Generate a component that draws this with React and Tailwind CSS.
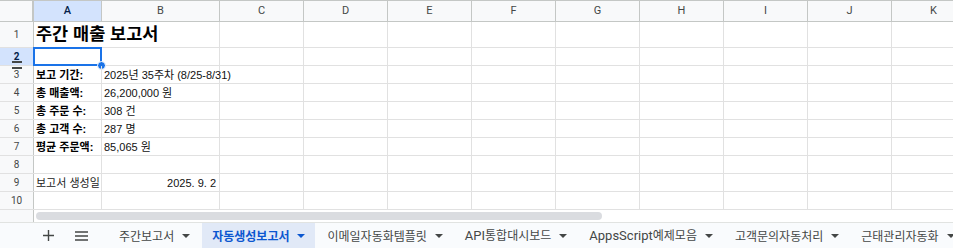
import React from 'react'

const COLS = [
  { name: 'A', w: 'w-[68px]' },
  { name: 'B', w: 'w-[118px]' },
  { name: 'C', w: 'w-[84px]' },
  { name: 'D', w: 'w-[84px]' },
  { name: 'E', w: 'w-[84px]' },
  { name: 'F', w: 'w-[84px]' },
  { name: 'G', w: 'w-[84px]' },
  { name: 'H', w: 'w-[84px]' },
  { name: 'I', w: 'w-[84px]' },
  { name: 'J', w: 'w-[84px]' },
  { name: 'K', w: 'w-[84px]' },
]

const ROWS = [
  { n: 1, h: 'h-[26px]', a: '주간 매출 보고서', title: true },
  { n: 2, h: 'h-[18px]', selected: true },
  { n: 3, h: 'h-[18px]', a: '보고 기간:', b: '2025년 35주차 (8/25-8/31)', bold: true },
  { n: 4, h: 'h-[18px]', a: '총 매출액:', b: '26,200,000 원', bold: true },
  { n: 5, h: 'h-[18px]', a: '총 주문 수:', b: '308 건', bold: true },
  { n: 6, h: 'h-[18px]', a: '총 고객 수:', b: '287 명', bold: true },
  { n: 7, h: 'h-[18px]', a: '평균 주문액:', b: '85,065 원', bold: true },
  { n: 8, h: 'h-[18px]' },
  { n: 9, h: 'h-[18px]', a: '보고서 생성일', b: '2025. 9. 2', right: true },
  { n: 10, h: 'h-[18px]' },
]

const Caret = ({ color = '#444746' }) => (
  <svg width="8" height="4" viewBox="0 0 8 4">
    <path d="M0 0h8L4 4z" fill={color} />
  </svg>
)

const Tab = ({ children, active }) => (
  <div
    className={`flex shrink-0 items-center h-full pl-[10px] pr-[10px] gap-[8px] mr-[2px] whitespace-nowrap ${
      active ? 'bg-[#e1e9f7] text-[#0b57d0] font-bold' : 'text-[#444746]'
    }`}
  >
    <span className="text-[12px] leading-none">{children}</span>
    <Caret color={active ? '#0b57d0' : '#444746'} />
  </div>
)

const Latin = ({ children }) => (
  <span className="text-[13px] font-['Roboto','Liberation_Sans',sans-serif]">{children}</span>
)

export default function App() {
  return (
    <div className="w-[953px] h-[248px] overflow-hidden bg-white font-['Liberation_Sans','Noto_Sans_CJK_KR',sans-serif] text-[#000]">
      {/* Column header */}
      <div className="flex h-[22px] border-t border-b border-[#c4c7c5] bg-[#f8f9fa]">
        <div className="w-[34px] shrink-0 border-r-2 border-[#c4c7c5]" />
        {COLS.map((c) => (
          <div
            key={c.name}
            className={`${c.w} shrink-0 border-r border-[#c4c7c5] flex items-center justify-center text-[11px] font-['Roboto','Liberation_Sans',sans-serif] ${
              c.name === 'A' ? 'bg-[#d3e3fd] text-[#041e49] font-medium' : 'text-[#444746]'
            }`}
          >
            {c.name}
          </div>
        ))}
      </div>

      {/* Rows */}
      {ROWS.map((r) => (
        <div key={r.n} className={`flex ${r.h} border-b border-[#e1e1e1]`}>
          <div
            className={`w-[34px] shrink-0 border-r border-[#c4c7c5] flex items-center justify-center text-[10px] font-['Roboto','Liberation_Sans',sans-serif] relative ${
              r.selected ? 'bg-[#d3e3fd] text-[#041e49] font-bold' : 'bg-[#f8f9fa] text-[#444746]'
            }`}
          >
            {r.n}
            {r.n === 2 && <div className="absolute left-[12px] bottom-[2px] w-[10px] h-[2px] bg-[#444746]" />}
            {r.n === 3 && <div className="absolute left-[12px] top-[1px] w-[10px] h-[2px] bg-[#444746]" />}
          </div>

          {/* A */}
          <div
            className={`w-[68px] shrink-0 border-r ${
              r.title ? 'border-transparent' : 'border-[#e1e1e1]'
            } relative flex items-end pl-[2px] pb-[2px] whitespace-nowrap`}
          >
            {r.title && (
              <span className="text-[17.5px] font-bold leading-none pb-[2px]">{r.a}</span>
            )}
            {!r.title && r.a && (
              <span className={`text-[11px] leading-none ${r.bold ? 'font-bold' : 'text-[#222]'}`}>{r.a}</span>
            )}
            {r.selected && (
              <>
                <div className="absolute left-[-1px] top-[-1px] right-[-1px] bottom-[-1px] border-2 border-[#1a73e8]" />
                <div className="absolute right-[-5px] bottom-[-5px] w-[9px] h-[9px] rounded-full bg-[#1a73e8] border border-white" />
              </>
            )}
          </div>

          {/* B */}
          <div
            className={`w-[118px] shrink-0 border-r border-[#e1e1e1] flex items-end pb-[2px] whitespace-nowrap ${
              r.right ? 'justify-end pr-[3px]' : 'pl-[2px]'
            }`}
          >
            {r.b && <span className="text-[11px] leading-none text-[#111]">{r.b}</span>}
          </div>

          {COLS.slice(2).map((c) => (
            <div key={c.name} className={`${c.w} shrink-0 border-r border-[#e1e1e1]`} />
          ))}
        </div>
      ))}

      {/* Horizontal scrollbar */}
      <div className="flex h-[12px]">
        <div className="w-[34px] shrink-0 border-r border-[#c4c7c5] bg-[#f8f9fa]" />
        <div className="flex-1 flex items-center pl-[2px]">
          <div className="w-[566px] h-[8px] rounded-full bg-[#dadce0]" />
        </div>
      </div>

      {/* Sheet tabs */}
      <div className="flex items-center h-[26px] border-t border-[#e1e3e1] bg-[#f9fbfd] font-['Noto_Sans_CJK_KR',sans-serif]">
        <div className="w-[40px] shrink-0" />
        <div className="w-[16px] h-[16px] shrink-0 flex items-center justify-center">
          <svg width="11" height="11" viewBox="0 0 11 11">
            <path d="M5.5 0v11M0 5.5h11" stroke="#444746" strokeWidth="1.4" />
          </svg>
        </div>
        <div className="w-[17px] shrink-0" />
        <div className="w-[16px] h-[16px] shrink-0 flex items-center justify-center">
          <svg width="13" height="10" viewBox="0 0 13 10">
            <path d="M0 1h13M0 5h13M0 9h13" stroke="#444746" strokeWidth="1.4" />
          </svg>
        </div>
        <div className="w-[20px] shrink-0" />
        <Tab>주간보고서</Tab>
        <Tab active>자동생성보고서</Tab>
        <Tab>이메일자동화템플릿</Tab>
        <Tab>
          <Latin>API</Latin>통합대시보드
        </Tab>
        <Tab>
          <Latin>AppsScript</Latin>예제모음
        </Tab>
        <Tab>고객문의자동처리</Tab>
        <Tab>근태관리자동화</Tab>
      </div>
    </div>
  )
}
